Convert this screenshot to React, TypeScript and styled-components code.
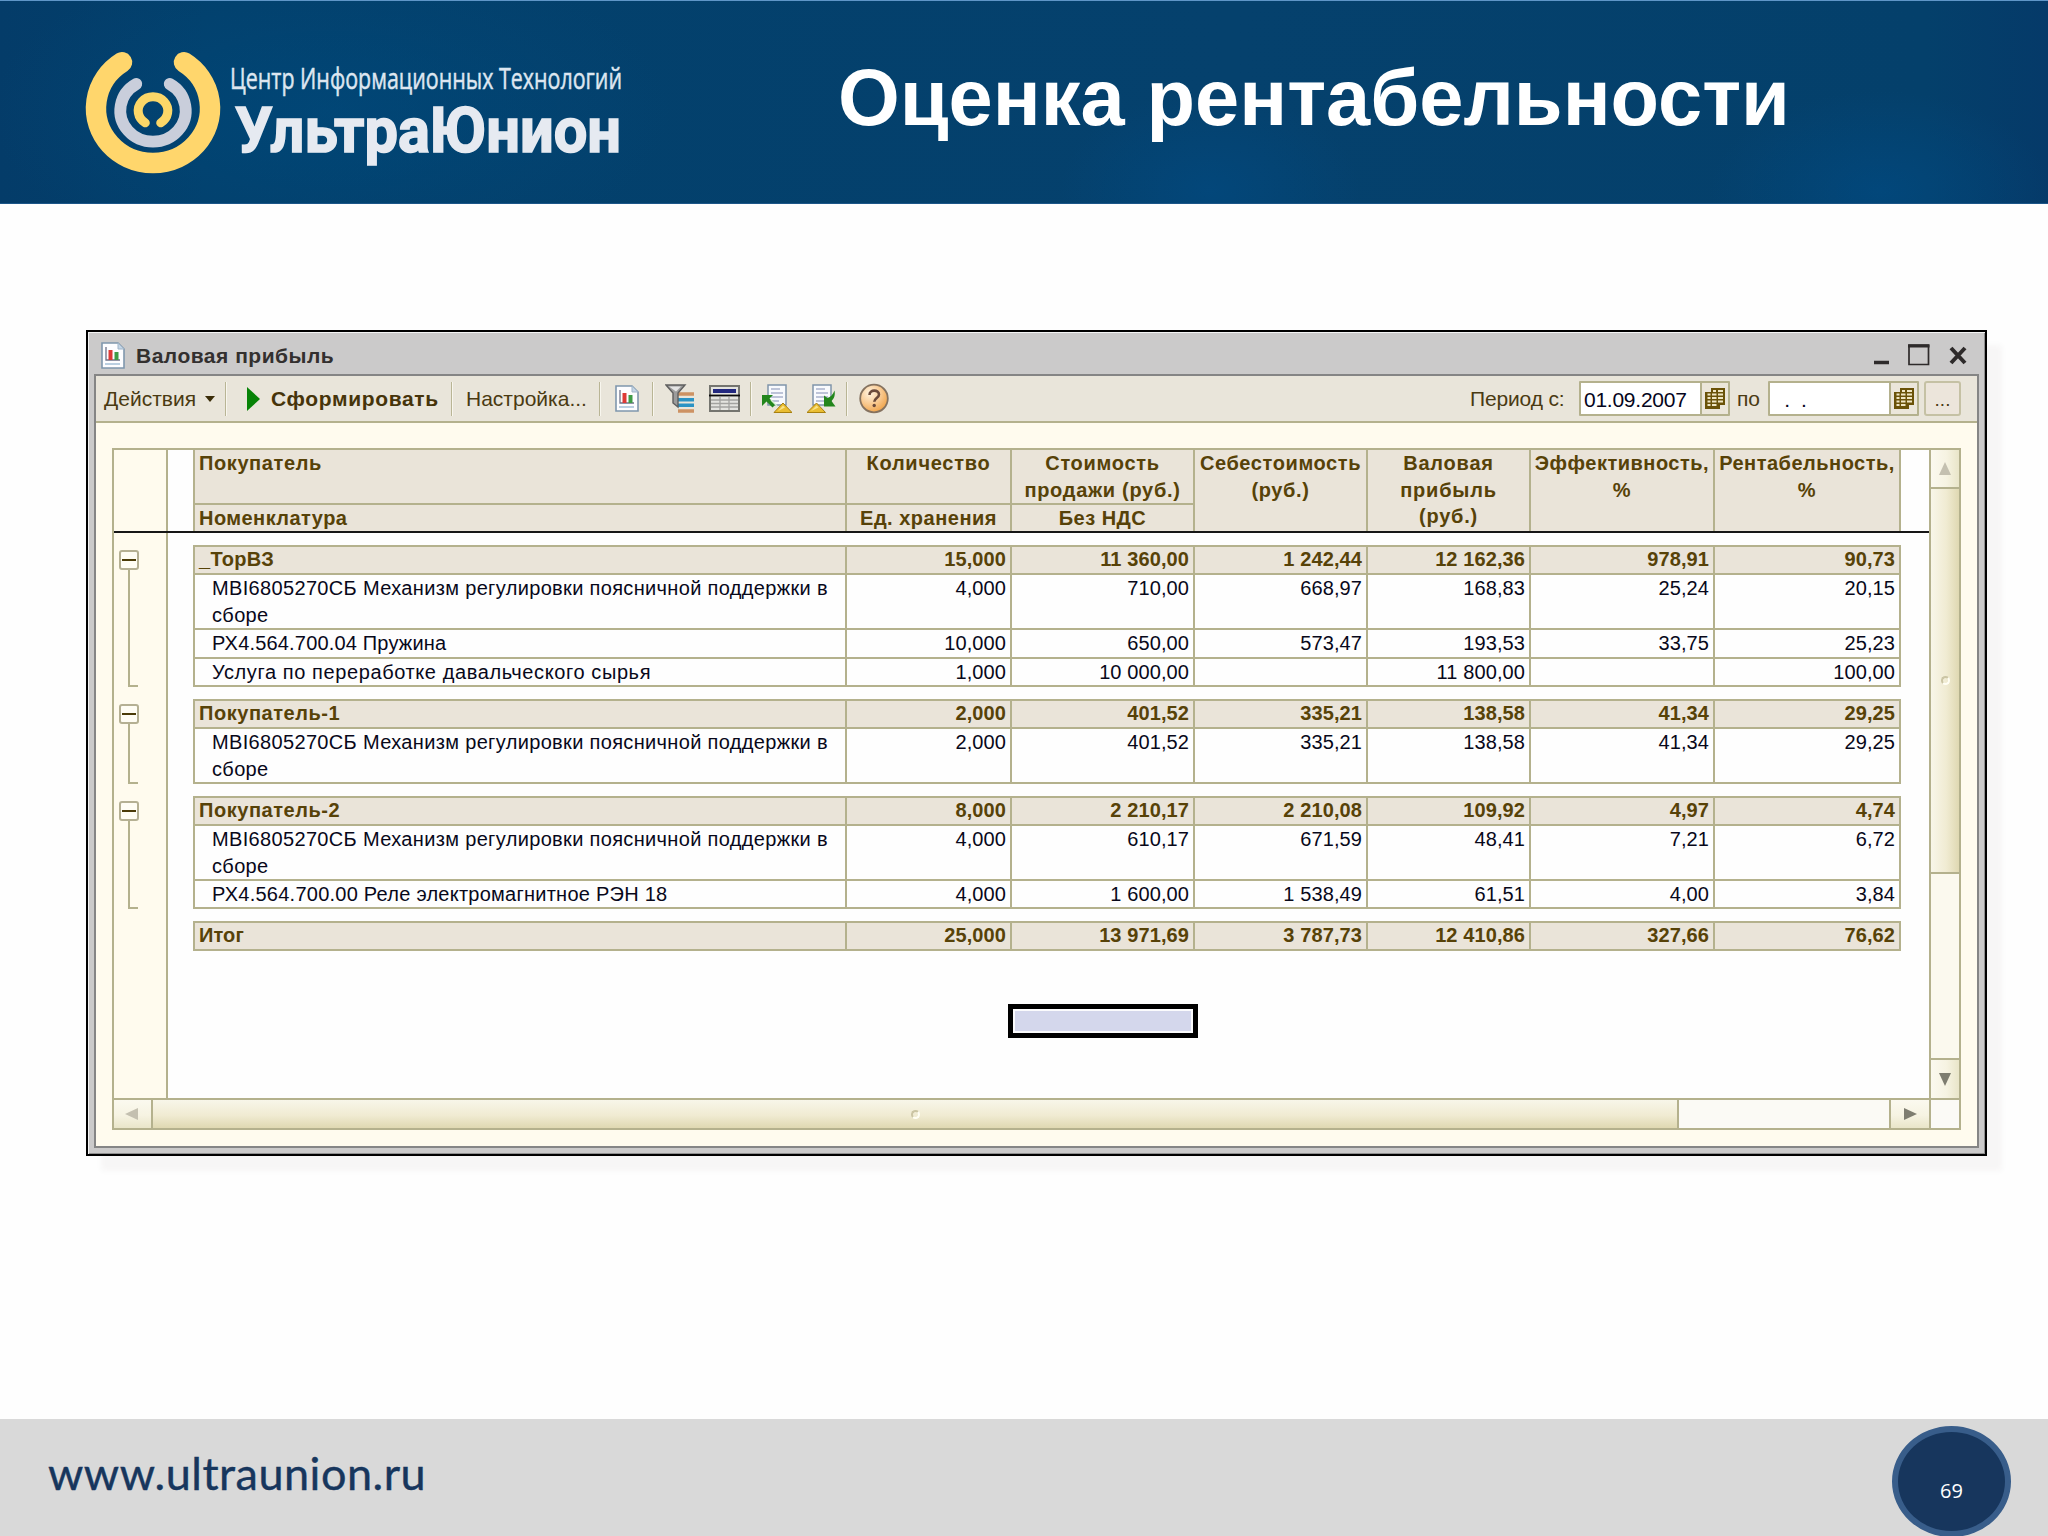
import React from "react";
import styled, { createGlobalStyle, css } from "styled-components";

const line = "#b4b18d";
const cream = "#fffbee";
const sand = "#eae4d9";
const brown = "#574208";

const GlobalStyle = createGlobalStyle`
  *, *::before, *::after { box-sizing: border-box; }
  body { margin: 0; background: #fefefe; font-family: "Liberation Sans", Arial, sans-serif; }
`;

/* ---------- slide ---------- */

const Slide = styled.div`
  width: 2048px;
  height: 1536px;
  display: flex;
  flex-direction: column;
  overflow: hidden;
  background: #fefefe;
`;

const Banner = styled.header`
  height: 204px;
  flex: none;
  display: flex;
  border-top: 1px solid #5f96c8;
  border-bottom: 1px solid #1c5688;
  background:
    radial-gradient(ellipse 150px 100px at 1210px 190px, rgba(0, 78, 138, 0.45), transparent),
    radial-gradient(ellipse 170px 100px at 1880px 190px, rgba(0, 78, 138, 0.5), transparent),
    radial-gradient(ellipse 340px 160px at 330px 110px, rgba(0, 76, 128, 0.5), transparent),
    linear-gradient(90deg, #043c69 0, #02406c 10%, #05416d 60%, #04406b 94%, #053a69 100%);
`;

const Logo = styled.svg`
  width: 560px;
  height: 180px;
  margin: 9px 0 0 80px;
  flex: none;
  overflow: visible;
`;

const Heading = styled.h1`
  margin: 49px 0 0 198px;
  font-size: 79.4px;
  line-height: 96px;
  font-weight: bold;
  color: #fff;
  white-space: nowrap;
`;

const Stage = styled.main`
  flex: 1;
  padding: 126px 61px 0 86px;
`;

const Footer = styled.footer`
  height: 117px;
  flex: none;
  display: flex;
  justify-content: space-between;
  background: #d9d9d9;
  padding: 7px 37px 0 48px;
`;

const Site = styled.span`
  font-family: Lato, "Open Sans", sans-serif;
  font-size: 45px;
  line-height: 54px;
  margin-top: 20px;
  letter-spacing: 0.5px;
  color: #17365d;
  -webkit-text-stroke: 0.4px #17365d;
`;

const PageBadge = styled.div`
  width: 119px;
  height: 111px;
  border: 6px solid #385d8a;
  border-radius: 50%;
  background: #17365d;
  color: #fff;
  font: 20px/24px "Open Sans", sans-serif;
  text-align: center;
  padding-top: 47px;
`;

/* ---------- window ---------- */

const Window = styled.section`
  width: 1901px;
  height: 826px;
  border: 2px solid #000;
  background: #cbcaca;
  box-shadow: inset 1px 1px 0 #f4f4f4, inset -1px -1px 0 #8f8f8f, 15px 15px 6px rgba(60, 40, 30, 0.035);
  padding: 0 6px 6px;
  display: flex;
  flex-direction: column;
`;

const TitleBar = styled.div`
  height: 42px;
  flex: none;
  display: flex;
  align-items: center;
  padding: 4px 10px 0 7px;
  color: #33302f;
`;

const Caption = styled.span`
  font-weight: bold;
  font-size: 21px;
  margin: 2px 0 0 11px;
  flex: 1;
  letter-spacing: 0.5px;
`;

const WindowButtons = styled.svg`
  width: 96px;
  height: 22px;
`;

const Client = styled.div`
  flex: 1;
  border: 2px solid #858585;
  background: ${cream};
  display: flex;
  flex-direction: column;
`;

const Toolbar = styled.div`
  height: 47px;
  flex: none;
  display: flex;
  align-items: center;
  background: #e9e5da;
  border-bottom: 2px solid ${line};
  padding: 0 16px 0 8px;
  font-size: 21px;
  color: #4a3a12;
  white-space: nowrap;
`;

const ToolText = styled.span<{ $w: number; $bold?: boolean; $ls?: number }>`
  width: ${(p) => p.$w}px;
  flex: none;
  letter-spacing: ${(p) => p.$ls ?? 0}px;
  ${(p) => p.$bold && css`font-weight: bold; color: #46340a;`}
`;

const Separator = styled.i<{ $l: number; $r: number }>`
  width: 2px;
  height: 34px;
  flex: none;
  margin: 0 ${(p) => p.$r}px 0 ${(p) => p.$l}px;
  background: linear-gradient(90deg, #b9b595 50%, #f8f6ee 50%);
`;

const Glyph = styled.svg<{ $r?: number }>`
  flex: none;
  display: block;
  margin-right: ${(p) => p.$r ?? 0}px;
`;

const Spacer = styled.div`
  flex: 1;
`;

const DateField = styled.div<{ $r: number }>`
  width: 151px;
  height: 35px;
  flex: none;
  display: flex;
  border: 2px solid ${line};
  border-radius: 1px;
  margin-right: ${(p) => p.$r}px;
  color: #05051c;
`;

const DateValue = styled.span`
  flex: 1;
  background: #fff;
  line-height: 33px;
  padding-left: 3px;
  letter-spacing: -0.25px;
  white-space: pre;
`;

const DateButton = styled.span`
  width: 28px;
  border-left: 2px solid ${line};
  background: #ebe6da;
  display: grid;
  place-items: center;
`;

const MoreButton = styled.span`
  width: 37px;
  height: 35px;
  flex: none;
  border: 2px solid #c5c1a4;
  border-radius: 3px;
  background: #ece5db;
  text-align: center;
  line-height: 33px;
  font-size: 19px;
`;

/* ---------- report grid ---------- */

const Frame = styled.div`
  margin: 25px 16px 16px;
  flex: 1;
  border: 2px solid ${line};
  display: grid;
  grid-template-columns: 1815px 30px;
  grid-template-rows: 648px 30px;
`;

const Area = styled.div`
  display: flex;
  flex-direction: column;
  background: #fefefe;
`;

const FrozenRow = styled.div`
  display: flex;
  height: 83px;
  border-bottom: 2px solid #161616;
`;

const BodyRow = styled.div`
  display: flex;
  flex: 1;
`;

const Gutter = styled.div`
  width: 54px;
  flex: none;
  border-right: 2px solid ${line};
  background: ${cream};
  margin-right: 25px;
`;

const TreeNode = styled.div<{ $h: number }>`
  height: ${(p) => p.$h}px;
  margin-top: 12px;
  padding: 5px 0 0 5px;
  display: flex;
  flex-direction: column;
`;

const Toggle = styled.span`
  width: 20px;
  height: 20px;
  flex: none;
  border: 2px solid #b5b093;
  border-radius: 3px;
  background: #fffdf4;
  display: grid;
  place-items: center;
  &::after { content: ""; width: 14px; height: 2px; background: #4b3b08; }
`;

const Branch = styled.span`
  flex: 1;
  width: 10px;
  margin-left: 9px;
  border-left: 2px solid ${line};
  border-bottom: 2px solid ${line};
`;

const columns = "650px 163px 181px 171px 161px 182px 184px";

const HeadGrid = styled.div`
  display: grid;
  grid-template-columns: ${columns};
  grid-template-rows: 53px 26px;
  gap: 2px;
  border: solid ${line};
  border-width: 0 2px;
  background: ${line};
`;

const HeadCell = styled.div<{ $tall?: boolean; $left?: boolean; $ls?: number }>`
  ${(p) => p.$tall && css`grid-row: span 2;`}
  background: ${sand};
  color: ${brown};
  font-weight: bold;
  font-size: 20px;
  line-height: 26.5px;
  text-align: ${(p) => (p.$left ? "left" : "center")};
  padding-left: ${(p) => (p.$left ? 4 : 0)}px;
  letter-spacing: ${(p) => p.$ls ?? 0.5}px;
  white-space: pre;
  overflow: hidden;
`;

const Sheet = styled.div`
  display: flex;
  flex-direction: column;
  align-items: flex-start;
`;

const Group = styled.div<{ $rows: string }>`
  display: grid;
  grid-template-columns: ${columns};
  grid-template-rows: ${(p) => p.$rows};
  gap: 2px;
  border: 2px solid ${line};
  background: ${line};
  margin-top: 12px;
`;

const Cell = styled.div<{ $bold?: boolean; $name?: boolean; $ls?: number }>`
  background: ${(p) => (p.$bold ? sand : "#fefefe")};
  color: ${(p) => (p.$bold ? brown : "#08081a")};
  font-weight: ${(p) => (p.$bold ? "bold" : "normal")};
  font-size: 20px;
  line-height: ${(p) => (p.$bold ? 25 : 26.5)}px;
  text-align: ${(p) => (p.$name ? "left" : "right")};
  padding: 0 4px 0 ${(p) => (p.$name && !p.$bold ? 17 : 4)}px;
  letter-spacing: ${(p) => p.$ls ?? 0.1}px;
  white-space: pre;
  overflow: hidden;
`;

const ActiveCell = styled.div`
  width: 190px;
  height: 34px;
  margin: 53px 0 0 815px;
  border: 5px solid #000;
  background: #d4d7ec;
  box-shadow: inset 0 0 0 2px #fbfbfd;
`;

/* ---------- scroll bars ---------- */

const VScroll = styled.div`
  display: flex;
  flex-direction: column;
  border-left: 2px solid ${line};
  width: 30px;
`;

const HScroll = styled.div`
  display: flex;
  border-top: 2px solid ${line};
  height: 30px;
`;

const Corner = styled.div`
  border-left: 2px solid ${line};
  border-top: 2px solid ${line};
  background: #fbfaf6;
`;

const VPart = styled.div<{ $h: number; $kind: "button" | "thumb" | "track" }>`
  height: ${(p) => p.$h}px;
  flex: none;
  display: grid;
  place-items: center;
  background: ${(p) =>
    p.$kind === "track"
      ? "#fbf9ee"
      : p.$kind === "thumb"
      ? "linear-gradient(90deg, #f8f6e9, #f0ebd2 55%, #dfd8b2)"
      : "linear-gradient(90deg, #fbf9ef, #f6f3e2 55%, #e9e5c9)"};
  & + & { border-top: 2px solid ${line}; }
`;

const HPart = styled.div<{ $w: number; $kind: "button" | "thumb" | "track" }>`
  width: ${(p) => p.$w}px;
  flex: none;
  display: grid;
  place-items: center;
  background: ${(p) =>
    p.$kind === "track"
      ? "#fbfaf5"
      : p.$kind === "thumb"
      ? "linear-gradient(#f8f6e9, #f0ebd2 55%, #dfd8b2)"
      : "linear-gradient(#fbf9ef, #f6f3e2 55%, #e9e5c9)"};
  & + & { border-left: 2px solid ${line}; }
`;

const Grip = styled.i`
  width: 9px;
  height: 9px;
  border-radius: 50%;
  border: 2px solid #cbc5a4;
  border-right-color: #fffef4;
  border-bottom-color: #fffef4;
`;

/* ---------- drawings ---------- */

const ReportIcon = ({ r = 0 }: { r?: number }) => (
  <Glyph width="24" height="27" viewBox="0 0 24 27" $r={r}>
    <path d="M1 1h16l6 6v19H1z" fill="#fdfdff" stroke="#7f97ad" strokeWidth="1.6" />
    <path d="M17 1v6h6z" fill="#c5d6e6" stroke="#9fb4c8" />
    <path d="M5 5v13h14" fill="none" stroke="#6e7288" strokeWidth="1.3" />
    <path d="M7.500 8h4v10h-4z" fill="#dd3a36" />
    <path d="M13.500 10h4v8h-4z" fill="#3f9c46" />
    <path d="M4 22h15" stroke="#a9c3da" strokeWidth="1.6" />
  </Glyph>
);

const FilterIcon = () => (
  <Glyph width="30" height="30" viewBox="0 0 30 30" $r={14}>
    <path d="M13 10h16M13 27h16" stroke="#cd9263" strokeWidth="3.600" />
    <path d="M13 15.700h16M13 21.300h16" stroke="#2b93c4" strokeWidth="3.600" />
    <path d="M1 1h19l-7 8v14l-5-4V9z" fill="#9c9c9c" stroke="#5f5f5f" strokeWidth="1.400" />
    <path d="M4 2.500h12l-5 5z" fill="#e4e4e4" />
  </Glyph>
);

const TableIcon = () => (
  <Glyph width="31" height="27" viewBox="0 0 31 27">
    <path d="M1 1h29v25H1z" fill="#e4e4e0" stroke="#75756f" strokeWidth="2" />
    <path d="M4 6h23" stroke="#23297f" strokeWidth="4" />
    <path d="M0 10.500h31" stroke="#0c0c0c" strokeWidth="1.800" />
    <path d="M2 15h27M2 18.500h27M2 22h27M11 12v13M20 12v13" stroke="#a3a3a0" strokeWidth="1.300" />
  </Glyph>
);

const Document = ({ x }: { x: number }) => (
  <g transform={`translate(${x} 0)`}>
    <path d="M1 1h18v20H1z" fill="#f8fafd" stroke="#8095ab" strokeWidth="1.500" />
    <path d="M4 5h9M4 9h12M4 13h12M4 17h8" stroke="#a9b2cc" strokeWidth="1.300" />
  </g>
);

const RestoreIcon = () => (
  <Glyph width="30" height="30" viewBox="0 0 30 30" $r={15}>
    <Document x={5} />
    <path d="M0 11h11l-3.500 3.500 6 6-3 3-6-6L0 22z" fill="#23861c" />
    <path d="M9 16l6 6" stroke="#d6efcf" strokeWidth="1.400" />
    <path d="M12 28.500L21 19l9 9.500z" fill="#e9bd32" stroke="#a8800f" />
    <path d="M16 27l5-5.500 2 2z" fill="#f9e38a" />
  </Glyph>
);

const SaveIcon = () => (
  <Glyph width="29" height="30" viewBox="0 0 29 30">
    <Document x={5} />
    <path d="M27.500 6.500c1 5-.5 8-3 10.500l4 5.500H17V11.500l3.500 2.500c3-1 5.500-3.500 7-7.500z" fill="#23861c" />
    <path d="M0 28.500L9.500 19l9 9.500z" fill="#e9bd32" stroke="#a8800f" />
    <path d="M4 27l5.500-5.500 2 2z" fill="#f9e38a" />
  </Glyph>
);

const HelpIcon = () => (
  <Glyph width="30" height="31" viewBox="0 0 30 31">
    <defs>
      <radialGradient id="help" cx="0.350" cy="0.300" r="0.800">
        <stop offset="0" stopColor="#fff3df" />
        <stop offset="0.550" stopColor="#f8c68a" />
        <stop offset="1" stopColor="#ee9d3d" />
      </radialGradient>
    </defs>
    <circle cx="15" cy="15.500" r="13.800" fill="url(#help)" stroke="#85725f" strokeWidth="1.800" />
    <path d="M10.500 12c0-6 9.500-5.500 9.500-.5 0 3.500-4.700 3.500-4.700 7.300" fill="none" stroke="#6b4a3a" strokeWidth="2.600" />
    <circle cx="15.200" cy="22.500" r="1.700" fill="#6b4a3a" />
  </Glyph>
);

const CalendarIcon = () => (
  <Glyph width="20" height="21" viewBox="0 0 20 21">
    <path d="M6 0h14v17h-5v4H0V4h6z" fill="#6a5208" />
    <path
      d="M8 3h3M13 3h5M2.500 6.500h3M7 6.500h4.500M13 6.500h5M2.500 10h3M7 10h4.500M13 10h5M2.500 13.500h3M7 13.500h4.500M13 13.500h5M2.500 17h3M7 17h4.500"
      stroke="#efe6c4"
      strokeWidth="1.900"
    />
  </Glyph>
);

const Arrow = ({ d, fill }: { d: string; fill: string }) => (
  <Glyph width="14" height="14" viewBox="0 0 14 14" $r={1}>
    <path d={d} fill={fill} />
  </Glyph>
);

const CompanyLogo = () => (
  <Logo viewBox="80 10 560 180">
    <g fill="none" strokeLinecap="round">
      <path d="M122 62.300A57 54.800 0 1 0 184 62.300" stroke="#ffd66c" strokeWidth="20.500" />
      <path d="M136.300 84A32.700 31 0 1 0 169.700 84" stroke="#c9cedb" strokeWidth="11.800" />
      <path d="M145.300 122.800A14.800 14 0 1 1 160.700 122.800" stroke="#fbd768" strokeWidth="9" />
    </g>
    <text x="230" y="89" fontFamily="Open Sans, sans-serif" fontSize="29.500" fill="#dde6f0" stroke="#dde6f0" strokeWidth="0.500" textLength="392" lengthAdjust="spacingAndGlyphs">
      Центр Информационных Технологий
    </text>
    <text x="235" y="151.500" fontFamily="Roboto, sans-serif" fontWeight="bold" fontSize="62.500" fill="#e6eaf1" stroke="#e6eaf1" strokeWidth="1.600" textLength="386" lengthAdjust="spacingAndGlyphs">
      УльтраЮнион
    </text>
  </Logo>
);

/* ---------- data ---------- */

type Row = { name: string; values: string[]; bold?: boolean; spacing: number };
type Block = { rows: Row[]; tracks: string; height: number };

const mechanism = {
  name: "МВІ6805270СБ Механизм регулировки поясничной поддержки в\nсборе",
  spacing: 0.34,
};

const blocks: Block[] = [
  {
    height: 142,
    tracks: "26px 53px 27px 26px",
    rows: [
      { name: "_ТорВЗ", bold: true, spacing: 0.3, values: ["15,000", "11 360,00", "1 242,44", "12 162,36", "978,91", "90,73"] },
      { ...mechanism, values: ["4,000", "710,00", "668,97", "168,83", "25,24", "20,15"] },
      { name: "РХ4.564.700.04 Пружина", spacing: 0.18, values: ["10,000", "650,00", "573,47", "193,53", "33,75", "25,23"] },
      { name: "Услуга по переработке давальческого сырья", spacing: 0.6, values: ["1,000", "10 000,00", "", "11 800,00", "", "100,00"] },
    ],
  },
  {
    height: 85,
    tracks: "26px 53px",
    rows: [
      { name: "Покупатель-1", bold: true, spacing: 0.55, values: ["2,000", "401,52", "335,21", "138,58", "41,34", "29,25"] },
      { ...mechanism, values: ["2,000", "401,52", "335,21", "138,58", "41,34", "29,25"] },
    ],
  },
  {
    height: 113,
    tracks: "26px 53px 26px",
    rows: [
      { name: "Покупатель-2", bold: true, spacing: 0.55, values: ["8,000", "2 210,17", "2 210,08", "109,92", "4,97", "4,74"] },
      { ...mechanism, values: ["4,000", "610,17", "671,59", "48,41", "7,21", "6,72"] },
      { name: "РХ4.564.700.00 Реле электромагнитное РЭН 18", spacing: 0.25, values: ["4,000", "1 600,00", "1 538,49", "61,51", "4,00", "3,84"] },
    ],
  },
];

const total: Block = {
  height: 30,
  tracks: "26px",
  rows: [{ name: "Итог", bold: true, spacing: 0.1, values: ["25,000", "13 971,69", "3 787,73", "12 410,86", "327,66", "76,62"] }],
};

const BlockView = ({ block }: { block: Block }) => (
  <Group $rows={block.tracks}>
    {block.rows.map((row, i) => (
      <React.Fragment key={i}>
        <Cell $name $bold={row.bold} $ls={row.spacing}>{row.name}</Cell>
        {row.values.map((v, j) => (
          <Cell key={j} $bold={row.bold}>{v}</Cell>
        ))}
      </React.Fragment>
    ))}
  </Group>
);

export default function App() {
  return (
    <Slide>
      <GlobalStyle />
      <Banner>
        <CompanyLogo />
        <Heading>Оценка рентабельности</Heading>
      </Banner>
      <Stage>
        <Window>
          <TitleBar>
            <ReportIcon />
            <Caption>Валовая прибыль</Caption>
            <WindowButtons viewBox="0 0 96 22">
              <path d="M1 18.500h15" stroke="#2e2b2b" strokeWidth="3.500" />
              <path d="M36 1v19.500h19.500V1z" fill="none" stroke="#2e2b2b" strokeWidth="1.700" />
              <path d="M35 2h21.500" stroke="#2e2b2b" strokeWidth="3" />
              <path d="M78 4l14 15M92 4L78 19" stroke="#2e2b2b" strokeWidth="4" />
            </WindowButtons>
          </TitleBar>
          <Client>
            <Toolbar>
              <ToolText $w={101}>Действия</ToolText>
              <Glyph width="10" height="6" viewBox="0 0 10 6" $r={10}>
                <path d="M0 0h10L5 6z" fill="#3a2c08" />
              </Glyph>
              <Separator $l={0} $r={20} />
              <Glyph width="13" height="24" viewBox="0 0 13 24" $r={11}>
                <path d="M0 0l13 12L0 24z" fill="#078307" />
              </Glyph>
              <ToolText $w={169} $bold $ls={0.65}>Сформировать</ToolText>
              <Separator $l={11} $r={13} />
              <ToolText $w={122}>Настройка...</ToolText>
              <Separator $l={11} $r={14} />
              <ReportIcon r={13} />
              <Separator $l={0} $r={11} />
              <FilterIcon />
              <TableIcon />
              <Separator $l={10} $r={10} />
              <RestoreIcon />
              <SaveIcon />
              <Separator $l={10} $r={11} />
              <HelpIcon />
              <Spacer />
              <ToolText $w={109} $ls={-0.15}>Период с:</ToolText>
              <DateField $r={7}>
                <DateValue>01.09.2007</DateValue>
                <DateButton><CalendarIcon /></DateButton>
              </DateField>
              <ToolText $w={31}>по</ToolText>
              <DateField $r={5}>
                <DateValue>{"  .  ."}</DateValue>
                <DateButton><CalendarIcon /></DateButton>
              </DateField>
              <MoreButton>...</MoreButton>
            </Toolbar>
            <Frame>
              <Area>
                <FrozenRow>
                  <Gutter />
                  <HeadGrid>
                    <HeadCell $left $ls={0.6}>Покупатель</HeadCell>
                    <HeadCell $ls={0.75}>Количество</HeadCell>
                    <HeadCell $ls={0.7}>{"Стоимость\nпродажи (руб.)"}</HeadCell>
                    <HeadCell $tall $ls={0.6}>{"Себестоимость\n(руб.)"}</HeadCell>
                    <HeadCell $tall $ls={0.8}>{"Валовая\nприбыль\n(руб.)"}</HeadCell>
                    <HeadCell $tall>{"Эффективность,\n%"}</HeadCell>
                    <HeadCell $tall>{"Рентабельность,\n%"}</HeadCell>
                    <HeadCell $left $ls={0.45}>Номенклатура</HeadCell>
                    <HeadCell>Ед. хранения</HeadCell>
                    <HeadCell>Без НДС</HeadCell>
                  </HeadGrid>
                </FrozenRow>
                <BodyRow>
                  <Gutter>
                    {blocks.map((b, i) => (
                      <TreeNode key={i} $h={b.height}>
                        <Toggle />
                        <Branch />
                      </TreeNode>
                    ))}
                  </Gutter>
                  <Sheet>
                    {blocks.map((b, i) => (
                      <BlockView key={i} block={b} />
                    ))}
                    <BlockView block={total} />
                    <ActiveCell />
                  </Sheet>
                </BodyRow>
              </Area>
              <VScroll>
                <VPart $h={37} $kind="button"><Arrow d="M7 0l6 13H1z" fill="#c4c0b0" /></VPart>
                <VPart $h={385} $kind="thumb"><Grip /></VPart>
                <VPart $h={186} $kind="track" />
                <VPart $h={40} $kind="button"><Arrow d="M1 1h12L7 14z" fill="#7e7d70" /></VPart>
              </VScroll>
              <HScroll>
                <HPart $w={37} $kind="button"><Arrow d="M0 7l13-6v12z" fill="#c4c0b0" /></HPart>
                <HPart $w={1526} $kind="thumb"><Grip /></HPart>
                <HPart $w={212} $kind="track" />
                <HPart $w={40} $kind="button"><Arrow d="M1 1l13 6-13 6z" fill="#7e7d70" /></HPart>
              </HScroll>
              <Corner />
            </Frame>
          </Client>
        </Window>
      </Stage>
      <Footer>
        <Site>www.ultraunion.ru</Site>
        <PageBadge>69</PageBadge>
      </Footer>
    </Slide>
  );
}
